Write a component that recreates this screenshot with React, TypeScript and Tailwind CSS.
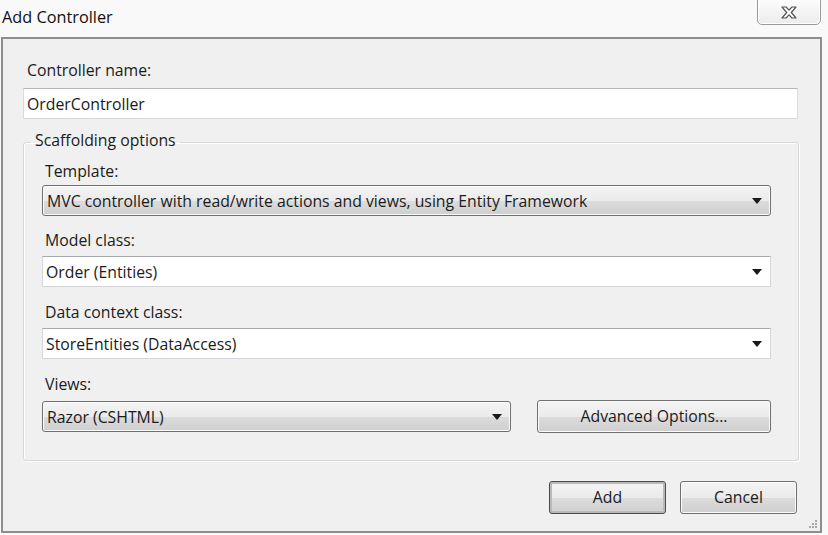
import React from "react";

const font = { fontFamily: '"Open Sans", "Noto Sans", sans-serif' };

function Arrow() {
  return (
    <svg width="10" height="6" viewBox="0 0 10 6" className="shrink-0">
      <path d="M0 0 H10 L5 6 Z" fill="#1a1a1a" />
    </svg>
  );
}

function ComboButton({ value, className = "" }: { value: string; className?: string }) {
  return (
    <div
      className={`flex items-center justify-between h-[31px] rounded-[3px] border border-[#707070] bg-[linear-gradient(to_bottom,#f4f4f4_0%,#ebebeb_50%,#dcdcdc_51%,#cfcfcf_100%)] shadow-[inset_0_0_0_1px_#fbfbfb] pl-[4px] pr-[8px] ${className}`}
    >
      <span className="text-[15.8px] text-[#1b1b1b] leading-5">{value}</span>
      <Arrow />
    </div>
  );
}

function ComboEdit({ value }: { value: string }) {
  return (
    <div className="flex items-center justify-between h-[31px] border border-[#d5d6d9] border-t-[#a8a9ac] bg-white pl-[3px] pr-[8px]">
      <span className="text-[15.8px] text-[#1b1b1b] leading-5">{value}</span>
      <Arrow />
    </div>
  );
}

function Button({ label, isDefault = false }: { label: string; isDefault?: boolean }) {
  return (
    <div
      className={`flex items-center justify-center w-[117px] h-[33px] rounded-[3px] border ${
        isDefault ? "border-[#4a4a4a] shadow-[inset_0_0_0_2px_#b9b9b9]" : "border-[#707070] shadow-[inset_0_0_0_1px_#fbfbfb]"
      } bg-[linear-gradient(to_bottom,#f4f4f4_0%,#ebebeb_50%,#dcdcdc_51%,#cfcfcf_100%)] text-[15.8px] text-[#1b1b1b]`}
    >
      {label}
    </div>
  );
}

function Label({ children, className = "" }: { children: React.ReactNode; className?: string }) {
  return <div className={`text-[15.8px] leading-5 text-[#1b1b1b] ${className}`}>{children}</div>;
}

export default function App() {
  return (
    <div className="relative w-[828px] h-[535px] bg-[#f9f9f9] overflow-hidden" style={font}>
      {/* title bar */}
      <div className="h-[37px] flex items-start pt-[7px] pl-[2px]">
        <span className="text-[16.3px] leading-5 text-[#111]">Add Controller</span>
      </div>
      <div className="absolute left-[757px] top-[-3px] w-[64px] h-[28px] rounded-b-[5px] border border-[#9a9a9a] bg-[linear-gradient(to_bottom,#fdfdfd,#ececec)] shadow-[inset_0_0_0_1px_#ffffff] flex items-center justify-center pt-[3px]">
        <svg width="16" height="13" viewBox="0 0 16 13">
          <path
            d="M1 1 H5 L8 4.2 L11 1 H15 L10.3 6.5 L15 12 H11 L8 8.8 L5 12 H1 L5.7 6.5 Z"
            fill="#ffffff"
            stroke="#555"
            strokeWidth="1.2"
            strokeLinejoin="round"
          />
        </svg>
      </div>

      {/* dialog body */}
      <div className="ml-[1px] w-[821px] h-[496px] border-2 border-[#8e8e8e] bg-[#f0f0f0] flex flex-col">
        <Label className="mt-[21px] ml-[24px]">Controller name:</Label>
        <div className="mt-[8px] ml-[20px] w-[775px] h-[31px] border border-[#dadbdd] border-t-[#b5b6b8] bg-white flex items-center pl-[3px]">
          <span className="text-[15.8px] leading-5 text-[#1b1b1b]">OrderController</span>
        </div>

        <fieldset className="mt-[15px] ml-[20px] w-[776px] h-[327px] border border-[#d8d8d8] rounded-[3px] shadow-[inset_1px_1px_0_#ffffff,1px_1px_0_#ffffff] px-[18px] pb-0">
          <legend className="ml-[-11px] px-[4px] text-[15.8px] leading-[16px] text-[#1b1b1b] -translate-y-[2px]">Scaffolding options</legend>
          <Label className="mt-[11px] ml-[3px]">Template:</Label>
          <ComboButton
            className="mt-[4px] w-[729px]"
            value="MVC controller with read/write actions and views, using Entity Framework"
          />
          <Label className="mt-[14px] ml-[3px]">Model class:</Label>
          <div className="mt-[6px] w-[729px]">
            <ComboEdit value="Order (Entities)" />
          </div>
          <Label className="mt-[15px] ml-[3px]">Data context class:</Label>
          <div className="mt-[6px] w-[729px]">
            <ComboEdit value="StoreEntities (DataAccess)" />
          </div>
          <Label className="mt-[15px] ml-[3px]">Views:</Label>
          <div className="mt-[6px] flex items-center gap-[26px]">
            <ComboButton className="w-[469px]" value="Razor (CSHTML)" />
            <div className="flex items-center justify-center w-[234px] h-[33px] rounded-[3px] border border-[#707070] shadow-[inset_0_0_0_1px_#fbfbfb] bg-[linear-gradient(to_bottom,#f4f4f4_0%,#ebebeb_50%,#dcdcdc_51%,#cfcfcf_100%)] text-[15.8px] text-[#1b1b1b]">
              Advanced Options...
            </div>
          </div>
        </fieldset>

        <div className="mt-[20px] ml-[546px] flex gap-[14px]">
          <Button label="Add" isDefault />
          <Button label="Cancel" />
        </div>
        <div className="mt-auto mb-[3px] mr-[3px] self-end grid grid-cols-3 gap-[1px]">
          {[0, 1, 2, 3, 4, 5, 6, 7, 8].map((i) => (
            <span
              key={i}
              className={`w-[2px] h-[2px] ${i === 0 || i === 1 || i === 3 ? "bg-transparent" : "bg-[#a8a8a8]"}`}
            />
          ))}
        </div>
      </div>
    </div>
  );
}
